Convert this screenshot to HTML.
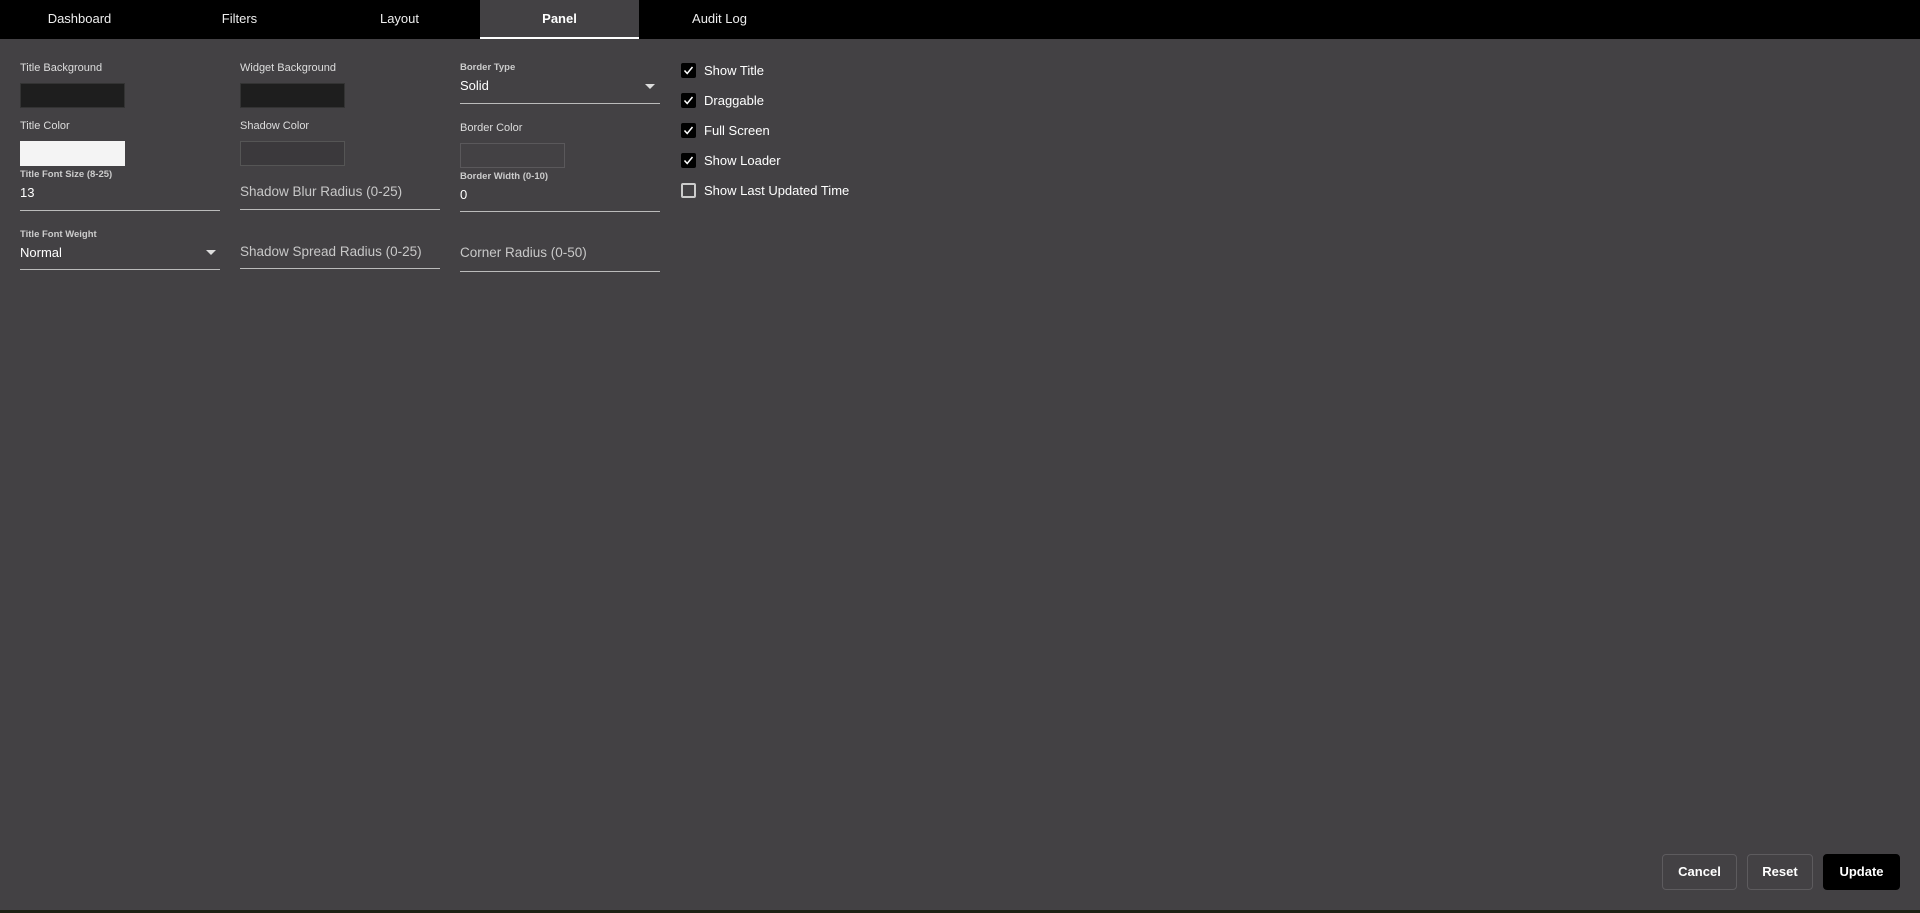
<!DOCTYPE html>
<html><head><meta charset="utf-8"><style>
*{margin:0;padding:0;box-sizing:border-box}
body{width:1920px;height:913px;background:#434144;font-family:"Liberation Sans",sans-serif;color:#fff;position:relative;overflow:hidden}
.tabs{position:absolute;left:0;top:0;width:1920px;height:39px;background:#000}
.tab{position:absolute;top:0;width:159px;height:39px;line-height:38px;text-align:center;font-size:13px;color:#eee}
.tab.act{background:#434144;border-bottom:2px solid #fff;font-weight:bold;color:#fff}
.a{position:absolute;white-space:nowrap}
.lbl{font-size:11px;color:#ddd}
.sm{font-size:9.5px;color:#ccc;font-weight:bold}
.val{font-size:13px;color:#fff}
.ph{font-size:13.5px;color:#c8c8c8}
.ul{position:absolute;height:1px;background:#bbb;width:200px}
.sw{position:absolute;width:105px;height:25px}
.arr{position:absolute;width:0;height:0;border-left:5px solid transparent;border-right:5px solid transparent;border-top:5px solid #ddd}
.cb{position:absolute;left:681px;width:15px;height:15px;background:#000;border-radius:2px}
.cb.off{background:transparent;border:2px solid #ccc}
.cb svg{position:absolute;left:1px;top:1px}
.ct{position:absolute;left:704px;font-size:13px;color:#fff}
.btn{position:absolute;top:854px;height:36px;border:1px solid #5d5b5e;border-radius:4px;font-size:13px;font-weight:bold;text-align:center;line-height:34px;color:#fff}
</style></head><body>
<div class="tabs">
<div class="tab" style="left:0">Dashboard</div>
<div class="tab" style="left:160px">Filters</div>
<div class="tab" style="left:320px">Layout</div>
<div class="tab act" style="left:480px">Panel</div>
<div class="tab" style="left:640px">Audit Log</div>
</div>

<div class="a lbl" style="left:20px;top:62px">Title Background</div>
<div class="sw" style="left:20px;top:83px;background:#1e1e1e;border:1px solid #333"></div>
<div class="a lbl" style="left:20px;top:120px">Title Color</div>
<div class="sw" style="left:20px;top:141px;background:#f4f4f4"></div>
<div class="a sm" style="left:20px;top:169px">Title Font Size (8-25)</div>
<div class="a val" style="left:20px;top:185px">13</div>
<div class="ul" style="left:20px;top:210px"></div>
<div class="a sm" style="left:20px;top:229px">Title Font Weight</div>
<div class="a val" style="left:20px;top:245px">Normal</div>
<div class="arr" style="left:206px;top:250px"></div>
<div class="ul" style="left:20px;top:269px"></div>

<div class="a lbl" style="left:240px;top:62px">Widget Background</div>
<div class="sw" style="left:240px;top:83px;background:#1e1e1e;border:1px solid #333"></div>
<div class="a lbl" style="left:240px;top:120px">Shadow Color</div>
<div class="sw" style="left:240px;top:141px;background:#3b393c;border:1px solid #555"></div>
<div class="a ph" style="left:240px;top:184px">Shadow Blur Radius (0-25)</div>
<div class="ul" style="left:240px;top:209px"></div>
<div class="a ph" style="left:240px;top:244px">Shadow Spread Radius (0-25)</div>
<div class="ul" style="left:240px;top:268px"></div>

<div class="a sm" style="left:460px;top:62px">Border Type</div>
<div class="a val" style="left:460px;top:78px">Solid</div>
<div class="arr" style="left:645px;top:84px"></div>
<div class="ul" style="left:460px;top:103px"></div>
<div class="a lbl" style="left:460px;top:122px">Border Color</div>
<div class="sw" style="left:460px;top:143px;background:#434144;border:1px solid #5a585b"></div>
<div class="a sm" style="left:460px;top:171px">Border Width (0-10)</div>
<div class="a val" style="left:460px;top:187px">0</div>
<div class="ul" style="left:460px;top:211px"></div>
<div class="a ph" style="left:460px;top:245px">Corner Radius (0-50)</div>
<div class="ul" style="left:460px;top:271px"></div>

<div class="cb" style="top:63px"><svg width="13" height="13" viewBox="0 0 13 13"><path d="M2.5 6.5l2.7 3L10.5 3" stroke="#fff" stroke-width="1.5" fill="none"/></svg></div>
<div class="ct" style="top:63px">Show Title</div>
<div class="cb" style="top:93px"><svg width="13" height="13" viewBox="0 0 13 13"><path d="M2.5 6.5l2.7 3L10.5 3" stroke="#fff" stroke-width="1.5" fill="none"/></svg></div>
<div class="ct" style="top:93px">Draggable</div>
<div class="cb" style="top:123px"><svg width="13" height="13" viewBox="0 0 13 13"><path d="M2.5 6.5l2.7 3L10.5 3" stroke="#fff" stroke-width="1.5" fill="none"/></svg></div>
<div class="ct" style="top:123px">Full Screen</div>
<div class="cb" style="top:153px"><svg width="13" height="13" viewBox="0 0 13 13"><path d="M2.5 6.5l2.7 3L10.5 3" stroke="#fff" stroke-width="1.5" fill="none"/></svg></div>
<div class="ct" style="top:153px">Show Loader</div>
<div class="cb off" style="top:183px"></div>
<div class="ct" style="top:183px">Show Last Updated Time</div>

<div class="btn" style="left:1662px;width:75px">Cancel</div>
<div class="btn" style="left:1747px;width:66px">Reset</div>
<div class="btn" style="left:1823px;width:77px;background:#000;border-color:#000">Update</div>
<div style="position:absolute;left:0;top:910px;width:1920px;height:3px;background:#1c2114"></div>
</body></html>
